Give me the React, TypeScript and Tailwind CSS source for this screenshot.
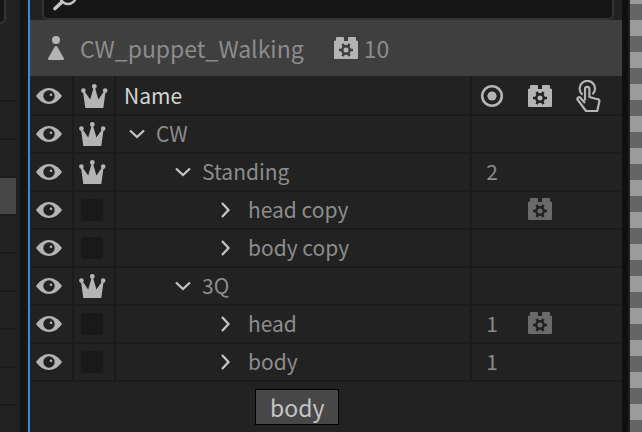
import React, { useState } from "react";

const Eye = () => (
  <svg width="26" height="16" viewBox="0 0 26 16" aria-hidden="true">
    <path d="M0 8C3.500 3 8 0 13 0s9.500 3 13 8c-3.500 5-8 8-13 8S3.500 13 0 8Z" fill="#b4b4b4" />
    <circle cx="13" cy="8" r="5.700" fill="#222" />
    <circle cx="15" cy="6.800" r="1.300" fill="#b4b4b4" />
  </svg>
);

const Crown = () => (
  <svg width="27" height="24" viewBox="0 0 27 24" fill="#b4b4b4" aria-hidden="true">
    <circle cx="2.400" cy="6.600" r="2.300" />
    <circle cx="13.300" cy="2.400" r="2.400" />
    <circle cx="24.200" cy="6.600" r="2.300" />
    <path d="M4.300 24 2 7.500 3.300 7l5.900 8.500L12.500 4h1.600l3.300 11.500L23.300 7l1.300.5L22.300 24Z" />
  </svg>
);

const Brick = ({ color, hole }: { color: string; hole: string }) => (
  <svg width="24" height="22" viewBox="0 0 24 22" aria-hidden="true">
    <path d="M2 3.500V1a1 1 0 0 1 1-1h6a1 1 0 0 1 1 1v3h4V1a1 1 0 0 1 1-1h6a1 1 0 0 1 1 1v2.500l2 .5v17a1 1 0 0 1-1 1H1a1 1 0 0 1-1-1V4Z" fill={color} />
    <circle cx="12" cy="13" r="3.700" fill="none" stroke={hole} strokeWidth="2.400" />
    <path d="M5 13h3M16 13h3M8.500 7l1.500 2.600M15.500 7 14 9.600M8.500 19l1.500-2.600M15.500 19 14 16.400" stroke={hole} strokeWidth="2.600" />
  </svg>
);

const Target = () => (
  <svg width="24" height="24" viewBox="0 0 24 24" aria-hidden="true">
    <circle cx="12" cy="12" r="9.800" fill="none" stroke="#b4b4b4" strokeWidth="2.600" />
    <circle cx="12" cy="12" r="4.600" fill="#b4b4b4" />
  </svg>
);

const Touch = () => (
  <svg width="26" height="32" viewBox="0 0 26 32" fill="none" stroke="#b4b4b4" strokeWidth="2.200" strokeLinejoin="round" aria-hidden="true">
    <path d="M6.500 14.600A7.700 7.700 0 1 1 16.500 14.300" />
    <path d="M9 20.500V9a2.200 2.200 0 0 1 4.400 0v8l8.200 2.200a2 2 0 0 1 1.800 2.400l-2.200 9.400H10L1.500 19.500c-.7-1.500 1.200-3 2.600-2l4.900 5.500" />
  </svg>
);

const Chevron = ({ open }: { open: boolean }) =>
  open ? (
    <svg width="16" height="10" viewBox="0 0 16 10" fill="none" stroke="#c4c4c4" strokeWidth="2.300" aria-hidden="true">
      <path d="m1 1.500 7 6.500 7-6.500" />
    </svg>
  ) : (
    <svg width="10" height="16" viewBox="0 0 10 16" fill="none" stroke="#c4c4c4" strokeWidth="2.300" aria-hidden="true">
      <path d="m1 1 6.500 7L1 15" />
    </svg>
  );

type Layer = {
  name: string;
  indent: string;
  open: boolean;
  crown: boolean;
  count?: number;
  brick?: boolean;
};

const layers: Layer[] = [
  { name: "CW", indent: "pl-3", open: true, crown: true },
  { name: "Standing", indent: "pl-[58px]", open: true, crown: true, count: 2 },
  { name: "head copy", indent: "pl-[104px]", open: false, crown: false, brick: true },
  { name: "body copy", indent: "pl-[104px]", open: false, crown: false },
  { name: "3Q", indent: "pl-[58px]", open: true, crown: true },
  { name: "head", indent: "pl-[104px]", open: false, crown: false, count: 1, brick: true },
  { name: "body", indent: "pl-[104px]", open: false, crown: false, count: 1 },
];

const ruled = "border-r-2 border-b-2 border-[#1b1b1b] p-0";
const plain = "border-b-2 border-[#1b1b1b] p-0";

function LayerRow({ layer }: { layer: Layer }) {
  return (
    <tr className="h-[38px]">
      <td className={ruled}>
        <button aria-label={`Toggle visibility of ${layer.name}`} className="flex pl-1.5">
          <Eye />
        </button>
      </td>
      <td className={ruled}>
        <button aria-label={`Toggle independence of ${layer.name}`} className="flex pl-[5px]">
          {layer.crown ? <Crown /> : <span className="ml-0.5 size-[22px] rounded-xs bg-[#191919]" />}
        </button>
      </td>
      <td className={ruled}>
        <div className={`flex items-center ${layer.indent}`}>
          <button aria-label={`Expand ${layer.name}`} aria-expanded={layer.open} className="flex w-7 shrink-0 justify-start pl-px">
            <Chevron open={layer.open} />
          </button>
          <span className="pb-0.5 whitespace-nowrap">{layer.name}</span>
        </div>
      </td>
      <td className={plain}>
        <div className="pb-0.5 text-center">{layer.count}</div>
      </td>
      <td className={plain}>
        {layer.brick && (
          <div className="flex justify-center pb-0.5">
            <Brick color="#6a6a6a" hole="#222" />
          </div>
        )}
      </td>
      <td className={plain} />
    </tr>
  );
}

export default function App() {
  const [query, setQuery] = useState("");
  return (
    <div className="relative flex h-screen overflow-hidden bg-[#222] font-['Noto_Sans_CJK_SC',sans-serif] text-[21px] leading-8 text-[#8c8c8c]">
      <aside className="flex w-5 shrink-0 flex-col pr-1">
        <div className="h-6 w-1.5 shrink-0 rounded-br-md border-r-2 border-b-2 border-[#333] bg-[#161616]" />
        <div className="h-[78px] shrink-0 border-b-2 border-[#1b1b1b]" />
        <div className="h-[38px] shrink-0 border-b-2 border-[#1b1b1b]" />
        <div className="h-[38px] shrink-0 border-b-2 border-[#1b1b1b]" />
        <div className="h-[38px] shrink-0 border-b-2 border-[#1b1b1b] bg-[#474747]" />
        {[0, 1, 2, 3, 4].map((i) => (
          <div key={i} className="h-[38px] shrink-0 border-b-2 border-[#1b1b1b]" />
        ))}
      </aside>
      <div className="w-2 shrink-0 bg-[#161616]" />
      <main className="min-w-0 flex-1 border-l-2 border-[#378ce0]">
        <div className="flex h-5 pr-2 pl-3">
          <label className="flex h-5 flex-1 items-start overflow-hidden rounded-b-md border-2 border-t-0 border-[#333] bg-[#161616]">
            <svg className="ml-2 shrink-0" width="26" height="12" viewBox="0 0 26 12" fill="none" stroke="#c4c4c4" strokeWidth="2.400" aria-hidden="true">
              <circle cx="16" cy="-4" r="8" />
              <path d="M10 2 3 8.500" strokeWidth="3.600" strokeLinecap="round" />
            </svg>
            <input
              aria-label="Search layers"
              value={query}
              onChange={(e) => setQuery(e.target.value)}
              className="h-4 min-w-0 flex-1 bg-transparent outline-none"
            />
          </label>
        </div>
        <header className="flex h-14 items-center bg-[#3f3f3f] pl-[18px] text-[23px]">
          <svg width="16" height="24" viewBox="0 0 16 24" fill="#b4b4b4" aria-hidden="true">
            <circle cx="8" cy="4" r="4" />
            <path d="M6.500 11Q8 9 9.500 11l6.500 11.500Q16 24 14.500 24h-13Q0 24 0 22.500Z" />
          </svg>
          <h1 className="ml-4 whitespace-nowrap">CW_puppet_Walking</h1>
          <div className="ml-[30px] flex items-center gap-1.5">
            <Brick color="#b4b4b4" hole="#3f3f3f" />
            <span>10</span>
          </div>
        </header>
        <table className="w-full table-fixed border-separate border-spacing-0">
          <colgroup>
            <col className="w-11" />
            <col className="w-[42px]" />
            <col />
            <col className="w-10" />
            <col className="w-14" />
            <col className="w-[54px]" />
          </colgroup>
          <thead>
            <tr className="h-10">
              <th className={ruled} aria-label="Visible">
                <div className="flex pt-0.5 pl-1.5">
                  <Eye />
                </div>
              </th>
              <th className={ruled} aria-label="Independent">
                <div className="flex pt-0.5 pl-[7px]">
                  <Crown />
                </div>
              </th>
              <th className={ruled}>
                <div className="pl-2 text-left font-normal text-[#d5d5d5]">Name</div>
              </th>
              <th className={plain} aria-label="Handles">
                <div className="flex justify-center pt-0.5">
                  <Target />
                </div>
              </th>
              <th className={plain} aria-label="Behaviors">
                <div className="flex justify-center pt-0.5">
                  <Brick color="#b4b4b4" hole="#222" />
                </div>
              </th>
              <th className={plain} aria-label="Triggers">
                <div className="flex pt-0.5 pl-2">
                  <Touch />
                </div>
              </th>
            </tr>
          </thead>
          <tbody>
            {layers.map((layer) => (
              <LayerRow key={layer.name} layer={layer} />
            ))}
          </tbody>
        </table>
      </main>
      <div className="w-2 shrink-0 border-r-2 border-[#1e1e1e] bg-[#101010]" />
      <div className="w-3 shrink-0 bg-[linear-gradient(to_bottom,#656565_16px,#9b9b9b_16px)] bg-[length:100%_32px] bg-[position:0_4px]" />
      <div role="tooltip" className="absolute top-[389px] left-[255px] flex h-9 items-center border border-black bg-[#474747] px-3.5 text-[23px] text-[#c4c4c4]">
        body
      </div>
    </div>
  );
}
